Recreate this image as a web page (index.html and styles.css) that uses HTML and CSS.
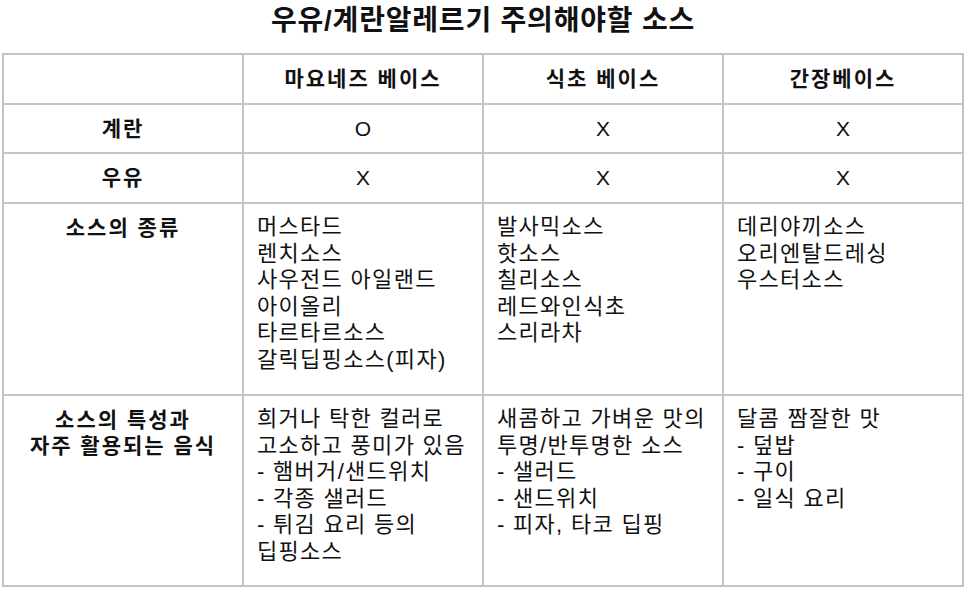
FILE: index.html
```html
<!DOCTYPE html>
<html lang="ko">
<head>
<meta charset="utf-8">
<link rel="stylesheet" href="styles.css">
</head>
<body>
<h1 class="title">우유/계란알레르기 주의해야할 소스</h1>
<table class="grid">
  <colgroup>
    <col class="c"><col class="c"><col class="c"><col class="c">
  </colgroup>
  <tr class="r-head">
    <th></th>
    <th>마요네즈 베이스</th>
    <th>식초 베이스</th>
    <th>간장베이스</th>
  </tr>
  <tr class="r-egg">
    <th>계란</th>
    <td class="mark">O</td>
    <td class="mark">X</td>
    <td class="mark">X</td>
  </tr>
  <tr class="r-milk">
    <th>우유</th>
    <td class="mark">X</td>
    <td class="mark">X</td>
    <td class="mark">X</td>
  </tr>
  <tr class="r-kind">
    <th class="top">소스의 종류</th>
    <td class="list">머스타드<br>렌치소스<br>사우전드 아일랜드<br>아이올리<br>타르타르소스<br>갈릭딥핑소스(피자)</td>
    <td class="list">발사믹소스<br>핫소스<br>칠리소스<br>레드와인식초<br>스리라차</td>
    <td class="list">데리야끼소스<br>오리엔탈드레싱<br>우스터소스</td>
  </tr>
  <tr class="r-use">
    <th class="top">소스의 특성과<br>자주 활용되는 음식</th>
    <td class="list">희거나 탁한 컬러로<br>고소하고 풍미가 있음<br>- 햄버거/샌드위치<br>- 각종 샐러드<br>- 튀김 요리 등의<br>딥핑소스</td>
    <td class="list">새콤하고 가벼운 맛의<br>투명/반투명한 소스<br>- 샐러드<br>- 샌드위치<br>- 피자, 타코 딥핑</td>
    <td class="list">달콤 짬잘한 맛<br>- 덮밥<br>- 구이<br>- 일식 요리</td>
  </tr>
</table>
</body>
</html>
```

FILE: styles.css
```css
html, body {
  margin: 0;
  padding: 0;
  background: #ffffff;
}
body {
  font-family: "Liberation Sans", "Noto Sans CJK KR", sans-serif;
  color: #111111;
}
.title {
  margin: 0;
  height: 53px;
  font-size: 28px;
  line-height: 41px;
  font-weight: 700;
  text-align: center;
  letter-spacing: 0.8px;
}
.grid {
  margin-left: 2px;
  width: 961px;
  border-collapse: collapse;
  table-layout: fixed;
}
.grid .c {
  width: 240px;
}
.grid th,
.grid td {
  border: 2px solid #c4c4c4;
  padding: 0 13px;
  vertical-align: middle;
}
.grid th {
  font-size: 21px;
  font-weight: 700;
  text-align: center;
  line-height: 26px;
  letter-spacing: 2px;
}
.grid .mark {
  text-align: center;
  font-size: 21px;
}
.r-head { height: 50px; }
.r-egg { height: 49px; }
.r-milk { height: 50px; }
.r-kind { height: 192px; }
.r-use { height: 191px; }
.grid .top {
  vertical-align: top;
  padding-top: 11px;
}
.grid .list {
  vertical-align: top;
  padding-top: 10px;
  font-size: 22px;
  line-height: 26.5px;
  letter-spacing: 1.3px;
}
```
